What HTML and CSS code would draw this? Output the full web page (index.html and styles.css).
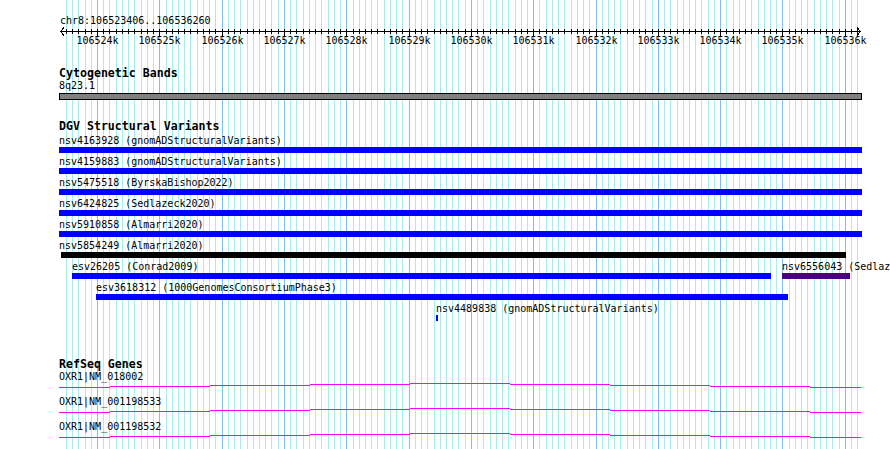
FILE: index.html
```html
<!DOCTYPE html>
<html lang="en">
<head>
<meta charset="UTF-8">
<meta name="viewport" content="width=device-width, initial-scale=1.0">
<title>chr8:106523406..106536260</title>
<link rel="stylesheet" href="styles.css">
</head>
<body>
<div class="browser">
    <svg class="grid" id="grid" width="890" height="449"></svg>

    <svg class="ruler" width="890" height="56">
        <text class="ruler-title" x="60" y="24">chr8:106523406..106536260</text>
        <g class="ticks" id="ticks">
            <line x1="60" y1="31.5" x2="861" y2="31.5"/>
            <polyline points="64,27.5 60.5,31.5 64,35.5"/>
            <polyline points="857,27.5 860.5,31.5 857,35.5"/>
        </g>
    </svg>

    <div class="tracks">
        <section class="track track-cyto">
            <h3 class="track-title">Cytogenetic Bands</h3>
            <div class="label">8q23.1</div>
            <div class="band"></div>
        </section>

        <section class="track track-dgv">
            <h3 class="track-title">DGV Structural Variants</h3>
            <div class="feature-row">
                <div class="feature" style="width:803px">
                    <div class="label">nsv4163928 (gnomADStructuralVariants)</div>
                    <div class="bar"></div>
                </div>
            </div>
            <div class="feature-row">
                <div class="feature" style="width:803px">
                    <div class="label">nsv4159883 (gnomADStructuralVariants)</div>
                    <div class="bar"></div>
                </div>
            </div>
            <div class="feature-row">
                <div class="feature" style="width:803px">
                    <div class="label">nsv5475518 (ByrskaBishop2022)</div>
                    <div class="bar"></div>
                </div>
            </div>
            <div class="feature-row">
                <div class="feature" style="width:803px">
                    <div class="label">nsv6424825 (Sedlazeck2020)</div>
                    <div class="bar"></div>
                </div>
            </div>
            <div class="feature-row">
                <div class="feature" style="width:803px">
                    <div class="label">nsv5910858 (Almarri2020)</div>
                    <div class="bar"></div>
                </div>
            </div>
            <div class="feature-row">
                <div class="feature" style="width:787px">
                    <div class="label">nsv5854249 (Almarri2020)</div>
                    <div class="bar bar-black" style="margin-left:2px"></div>
                </div>
            </div>
            <div class="feature-row">
                <div class="feature" style="margin-left:13px;width:699px">
                    <div class="label">esv26205 (Conrad2009)</div>
                    <div class="bar"></div>
                </div>
                <div class="feature" style="margin-left:11px;width:68px">
                    <div class="label">nsv6556043 (Sedlazeck2020)</div>
                    <div class="bar bar-indigo"></div>
                </div>
            </div>
            <div class="feature-row">
                <div class="feature" style="margin-left:37px;width:692px">
                    <div class="label">esv3618312 (1000GenomesConsortiumPhase3)</div>
                    <div class="bar"></div>
                </div>
            </div>
            <div class="feature-row">
                <div class="feature" style="margin-left:377px;width:2px">
                    <div class="label">nsv4489838 (gnomADStructuralVariants)</div>
                    <div class="bar"></div>
                </div>
            </div>
        </section>

        <section class="track track-genes">
            <h3 class="track-title">RefSeq Genes</h3>
            <div class="gene">
                <div class="label">OXR1|NM_018002</div>
                <svg class="intron" width="803" height="13"><path d="M0 4h51v1H0zM51 3h100v1H51zM151 2h100v1H151zM251 1h100v1H251zM351 0h100v1H351zM451 1h100v1H451zM551 2h100v1H551zM651 3h100v1H651zM751 4h51v1H751z"/></svg>
            </div>
            <div class="gene">
                <div class="label">OXR1|NM_001198533</div>
                <svg class="intron" width="803" height="13"><path d="M0 4h51v1H0zM51 3h100v1H51zM151 2h100v1H151zM251 1h100v1H251zM351 0h100v1H351zM451 1h100v1H451zM551 2h100v1H551zM651 3h100v1H651zM751 4h51v1H751z"/></svg>
            </div>
            <div class="gene">
                <div class="label">OXR1|NM_001198532</div>
                <svg class="intron" width="803" height="13"><path d="M0 4h51v1H0zM51 3h100v1H51zM151 2h100v1H151zM251 1h100v1H251zM351 0h100v1H351zM451 1h100v1H451zM551 2h100v1H551zM651 3h100v1H651zM751 4h51v1H751z"/></svg>
            </div>
        </section>
    </div>
</div>
<script src="script.js"></script>
</body>
</html>
```

FILE: styles.css
```css
body {
    margin: 0;
    background: #fff;
}
.browser {
    position: relative;
    width: 890px;
    height: 449px;
    overflow: hidden;
    font-family: "DejaVu Sans Mono", "Liberation Mono", monospace;
    color: #000;
}
.grid {
    position: absolute;
    top: 0;
    left: 0;
    z-index: 0;
}
.grid line {
    stroke-width: 1;
    shape-rendering: crispEdges;
}
.grid .grid-minor {
    stroke: #a8ecec;
}
.grid .grid-major {
    stroke: #80c0ea;
}
.ruler {
    position: relative;
    z-index: 1;
    display: block;
}
.ruler text {
    font-family: "DejaVu Sans Mono", "Liberation Mono", monospace;
    font-size: 10px;
    fill: #000;
}
.ruler .tick-label {
    text-anchor: middle;
}
.ticks line,
.ticks polyline {
    stroke: #000;
    stroke-width: 1;
    fill: none;
    shape-rendering: crispEdges;
}
.tracks {
    position: relative;
    z-index: 1;
    padding-left: 59px;
}
.track-cyto {
    margin-top: 11px;
}
.track-dgv {
    margin-top: 20px;
}
.track-genes {
    margin-top: 34px;
}
.track-title {
    margin: 0;
    font-size: 11.6px;
    line-height: 13px;
    font-weight: bold;
}
.track-dgv .track-title {
    margin-bottom: 2px;
}
.label {
    height: 12px;
    font-size: 10px;
    line-height: 12px;
    white-space: nowrap;
}
.band {
    box-sizing: border-box;
    width: 803px;
    height: 7px;
    margin-top: 1px;
    border: 1px solid #000;
    background-color: #808080;
}
.feature-row {
    display: flex;
    align-items: flex-start;
    height: 21px;
}
.feature {
    flex: none;
}
.bar {
    height: 6px;
    background-color: #0000ff;
}
.bar-black {
    background-color: #000;
}
.bar-indigo {
    background-color: #4b0082;
}
.gene {
    height: 25px;
}
.intron {
    display: block;
}
.intron path {
    fill: #ff00ff;
    shape-rendering: crispEdges;
}
```

FILE: script.js
```js
// grid lines and ruler ticks, one every 100 bp of the shown region
var START = 106523406, END = 106536260;
var LEFT = 60, WIDTH = 801;
var SVGNS = "http://www.w3.org/2000/svg";

function bpToX(bp) {
    return Math.round(LEFT + (bp - START) * WIDTH / (END - START));
}

function make(name, attrs) {
    var node = document.createElementNS(SVGNS, name);
    for (var key in attrs) {
        node.setAttribute(key, attrs[key]);
    }
    return node;
}

function drawGrid() {
    var grid = document.getElementById("grid");
    var ticks = document.getElementById("ticks");
    for (var bp = Math.ceil(START / 100) * 100; bp <= END; bp += 100) {
        var x = bpToX(bp) + 0.5;
        var major = bp % 1000 === 0;
        grid.appendChild(make("line", {x1: x, y1: 0, x2: x, y2: 449, "class": major ? "grid-major" : "grid-minor"}));
        ticks.appendChild(make("line", {x1: x, y1: 29, x2: x, y2: major ? 36 : 34}));
        if (major) {
            var label = make("text", {x: x, y: 44, "class": "tick-label"});
            label.textContent = (bp / 1000) + "k";
            ticks.appendChild(label);
        }
    }
}

drawGrid();
```
